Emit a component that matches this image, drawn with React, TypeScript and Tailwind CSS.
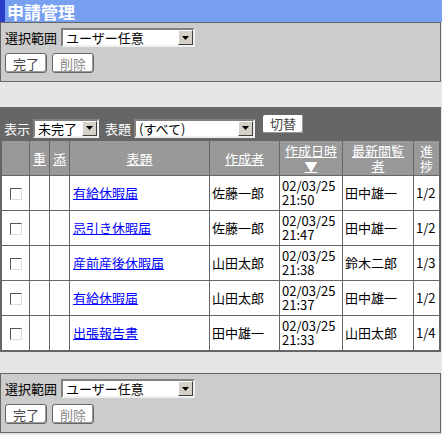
import React from 'react';

const font = { fontFamily: '"Noto Sans CJK JP", "DejaVu Sans", sans-serif' };

function Select({ value, width }: { value: string; width: string }) {
  return (
    <div className={`flex items-center h-[19px] bg-white border-2 border-t-[#808080] border-l-[#808080] border-b-[#f0f0f0] border-r-[#f0f0f0] ${width}`}>
      <span className="flex-1 pl-[3px] text-[13px] leading-none text-black whitespace-nowrap">{value}</span>
      <span className="flex items-center justify-center w-[15px] h-[15px] bg-[#d4d0c8] border border-t-white border-l-white border-b-[#404040] border-r-[#404040]">
        <svg width="7" height="4" viewBox="0 0 7 4"><path d="M0 0h7L3.5 4z" fill="#000" /></svg>
      </span>
    </div>
  );
}

function Btn({ label, disabled }: { label: string; disabled?: boolean }) {
  return (
    <button className={`h-[20px] px-[7px] rounded-[3px] bg-white border border-[#666] shadow-[inset_-1px_-1px_0_#999] text-[13px] leading-none ${disabled ? 'text-[#888]' : 'text-[#444]'}`}>
      {label}
    </button>
  );
}

function Box() {
  return <span className="inline-block w-[12px] h-[12px] bg-white border border-t-[#555] border-l-[#555] border-b-[#ddd] border-r-[#ddd] align-middle" />;
}

function ActionPanel() {
  return (
    <div className="bg-[#cccccc] border border-[#666] px-[4px] pt-[5px] pb-[8px] flex flex-col gap-[6px]">
      <div className="flex items-center gap-[4px]">
        <span className="text-[13px] leading-none text-black">選択範囲</span>
        <Select value="ユーザー任意" width="w-[134px]" />
      </div>
      <div className="flex gap-[5px]">
        <Btn label="完了" />
        <Btn label="削除" disabled />
      </div>
    </div>
  );
}

const rows = [
  { title: '有給休暇届', by: '佐藤一郎', date: '02/03/25', time: '21:50', last: '田中雄一', prog: '1/2' },
  { title: '忌引き休暇届', by: '佐藤一郎', date: '02/03/25', time: '21:47', last: '田中雄一', prog: '1/2' },
  { title: '産前産後休暇届', by: '山田太郎', date: '02/03/25', time: '21:38', last: '鈴木二郎', prog: '1/3' },
  { title: '有給休暇届', by: '山田太郎', date: '02/03/25', time: '21:37', last: '田中雄一', prog: '1/2' },
  { title: '出張報告書', by: '田中雄一', date: '02/03/25', time: '21:33', last: '山田太郎', prog: '1/4' },
];

export default function App() {
  return (
    <div className="w-[442px] h-[435px] bg-[#e6e6e6] text-[13px] text-black overflow-hidden" style={font}>
      <div className="h-[22px] bg-[#78a0f0] border-l-[5px] border-[#2a3cc8] pl-[2px] flex items-center">
        <span className="text-white font-bold text-[17px] leading-none">申請管理</span>
      </div>
      <div className="w-[441px]">
        <ActionPanel />
      </div>

      <div className="mt-[25px] w-[441px] bg-[#666666] border border-[#666]">
        <div className="h-[32px] flex items-center px-[3px] gap-[3px] text-white">
          <span className="mt-[8px] leading-none">表示</span>
          <div className="mt-[8px]"><Select value="未完了" width="w-[66px]" /></div>
          <span className="ml-[3px] mt-[8px] leading-none">表題</span>
          <div className="mt-[8px]"><Select value="(すべて)" width="w-[121px]" /></div>
          <div className="ml-[4px] mb-[1px]"><Btn label="切替" /></div>
        </div>
        <table className="w-full border-collapse table-fixed">
          <colgroup>
            <col className="w-[28px]" />
            <col className="w-[20px]" />
            <col className="w-[20px]" />
            <col className="w-[140px]" />
            <col className="w-[70px]" />
            <col className="w-[63px]" />
            <col className="w-[71px]" />
            <col />
          </colgroup>
          <thead>
            <tr className="h-[35px] bg-[#999999] text-white text-center leading-[15px]">
              <th className="border border-[#666] font-normal"></th>
              <th className="border border-[#666] font-normal underline">重</th>
              <th className="border border-[#666] font-normal underline">添</th>
              <th className="border border-[#666] font-normal underline">表題</th>
              <th className="border border-[#666] font-normal underline">作成者</th>
              <th className="border border-[#666] font-normal underline">作成日時<br />▼</th>
              <th className="border border-[#666] font-normal underline px-[4px]">最新閲覧者</th>
              <th className="border border-[#666] font-normal px-[6px]">進捗</th>
            </tr>
          </thead>
          <tbody className="bg-white">
            {rows.map((r, i) => (
              <tr key={i} className="h-[35px] leading-[14px]">
                <td className="border border-[#666] text-center"><Box /></td>
                <td className="border border-[#666]"></td>
                <td className="border border-[#666]"></td>
                <td className="border border-[#666] pl-[3px]"><a className="text-[#0000ff] underline">{r.title}</a></td>
                <td className="border border-[#666] pl-[2px]">{r.by}</td>
                <td className="border border-[#666] pl-[2px]">{r.date}<br />{r.time}</td>
                <td className="border border-[#666] pl-[2px]">{r.last}</td>
                <td className="border border-[#666] pl-[2px]">{r.prog}</td>
              </tr>
            ))}
          </tbody>
        </table>
      </div>

      <div className="mt-[21px] w-[441px]">
        <ActionPanel />
      </div>
    </div>
  );
}
